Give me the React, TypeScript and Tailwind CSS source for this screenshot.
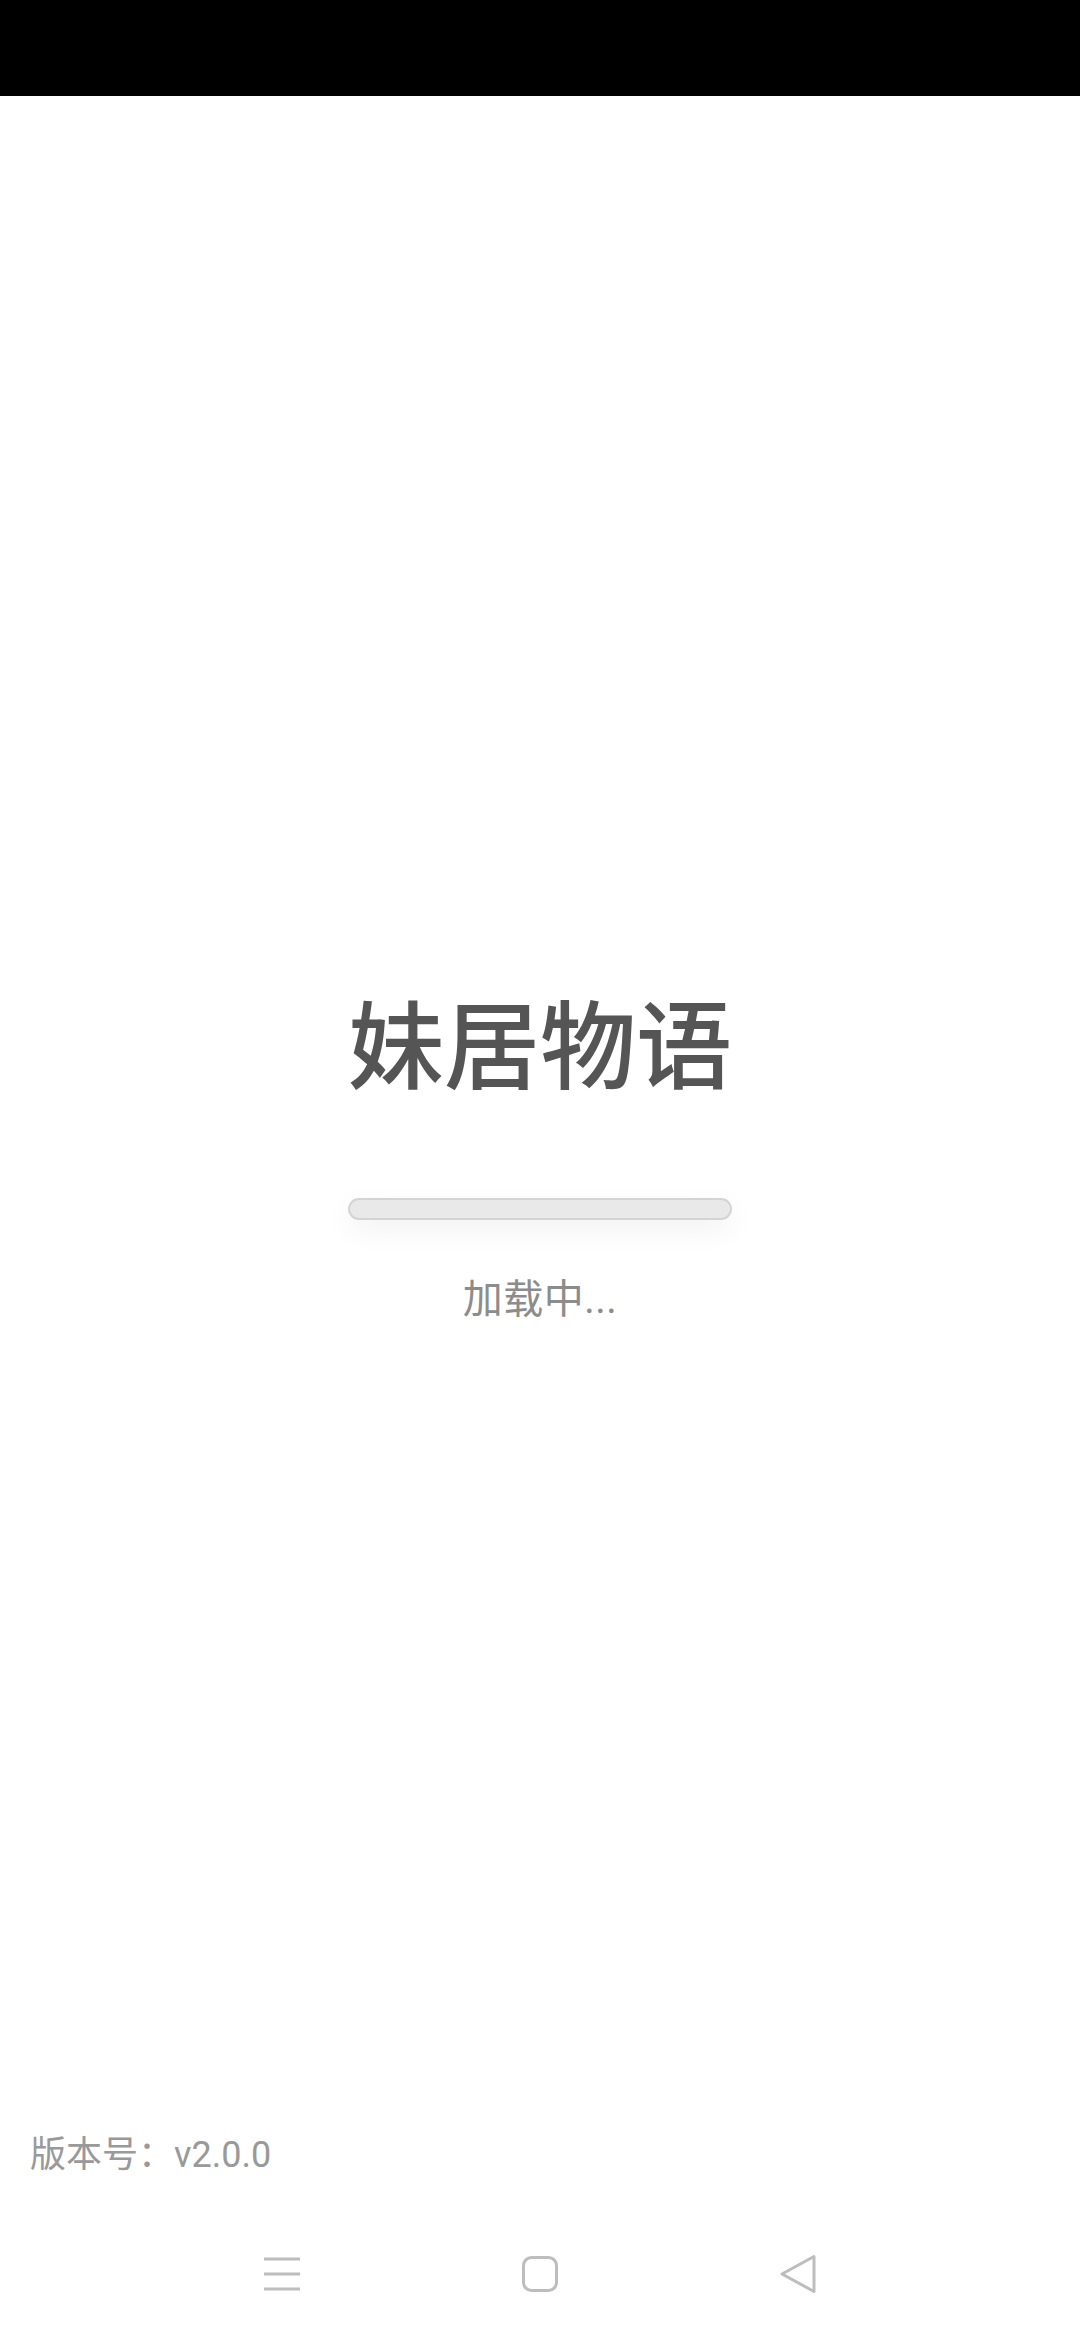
export default function App() {
  return (
    <div
      className="flex h-[2340px] w-[1080px] flex-col bg-white"
      style={{ fontFamily: 'Roboto, "Noto Sans CJK SC", sans-serif' }}
    >
      <div className="h-[96px] shrink-0 bg-black" />

      <div className="flex flex-1 flex-col items-center pt-[896px]">
        <h1
          className="text-[96px] leading-none font-medium text-[#555555]"
          style={{ fontFamily: '"Noto Sans CJK SC", sans-serif' }}
        >
          妹居物语
        </h1>
        <div className="mt-[110px] h-[22px] w-[384px] rounded-full border-2 border-[#d4d4d4] bg-[#e9e9e9] shadow-[0_10px_28px_rgba(0,0,0,0.06)]" />
        <p className="mt-[60px] text-[40px] leading-none tracking-[0.5px] text-[#8c8c8c]">加载中...</p>
      </div>

      <div className="px-[30px] pb-[35px] text-[36px] leading-none text-[#999999]">版本号：v2.0.0</div>

      <div className="flex h-[132px] shrink-0 items-center justify-center">
        <div className="flex w-[258px] justify-center">
          <svg width="36" height="36" viewBox="0 0 36 36" fill="none" stroke="#bdbdbd" strokeWidth="3">
            <path d="M0 3h36M0 18h36M0 33h36" />
          </svg>
        </div>
        <div className="flex w-[258px] justify-center">
          <svg width="36" height="36" viewBox="0 0 36 36" fill="none" stroke="#bdbdbd" strokeWidth="3">
            <rect x="1.5" y="1.5" width="33" height="33" rx="8" />
          </svg>
        </div>
        <div className="flex w-[258px] justify-center">
          <svg width="38" height="42" viewBox="0 0 38 42" fill="none" stroke="#bdbdbd" strokeWidth="3" strokeLinejoin="round">
            <path d="M35 3.5 L3 21 L35 38.5 Z" />
          </svg>
        </div>
      </div>
    </div>
  );
}
